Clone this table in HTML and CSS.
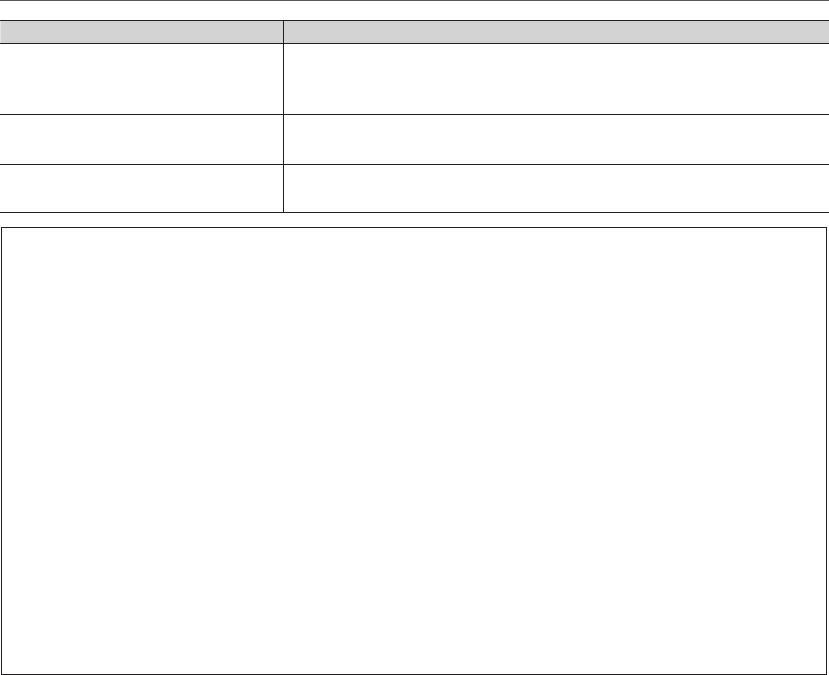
FILE: index.html
```html
<!DOCTYPE html>
<html lang="en">
<head>
<meta charset="utf-8">
<title>Table</title>
<link rel="stylesheet" href="styles.css">
</head>
<body>
<div class="rule"></div>
<div class="table">
  <div class="row head">
    <div class="cell first"></div>
    <div class="cell"></div>
  </div>
  <div class="row r1">
    <div class="cell first"></div>
    <div class="cell"></div>
  </div>
  <div class="row r2">
    <div class="cell first"></div>
    <div class="cell"></div>
  </div>
  <div class="row r3">
    <div class="cell first"></div>
    <div class="cell"></div>
  </div>
</div>
<div class="box"></div>
</body>
</html>
```
FILE: styles.css
```css
html, body {
  margin: 0;
  padding: 0;
  background: #ffffff;
  font-family: "Liberation Sans", Arial, sans-serif;
}
.rule {
  height: 1px;
  background: #5a5a5a;
}
.table {
  margin-top: 19px;
  width: 829px;
  border-top: 1px solid #231f20;
}
.row {
  display: grid;
  grid-template-columns: 284px 1fr;
  border-bottom: 1px solid #231f20;
}
.cell {
  box-sizing: border-box;
}
.cell.first {
  border-right: 1px solid #231f20;
}
.head {
  height: 22px;
  background: linear-gradient(to right, #e6e6e6 0 1px, #d3d3d3 1px);
}
.r1 { height: 70px; }
.r2 { height: 49px; }
.r3 { height: 47px; }
.box {
  box-sizing: border-box;
  margin: 14px 0 0 1px;
  width: 826px;
  height: 448px;
  border: 1px solid #231f20;
}
```
